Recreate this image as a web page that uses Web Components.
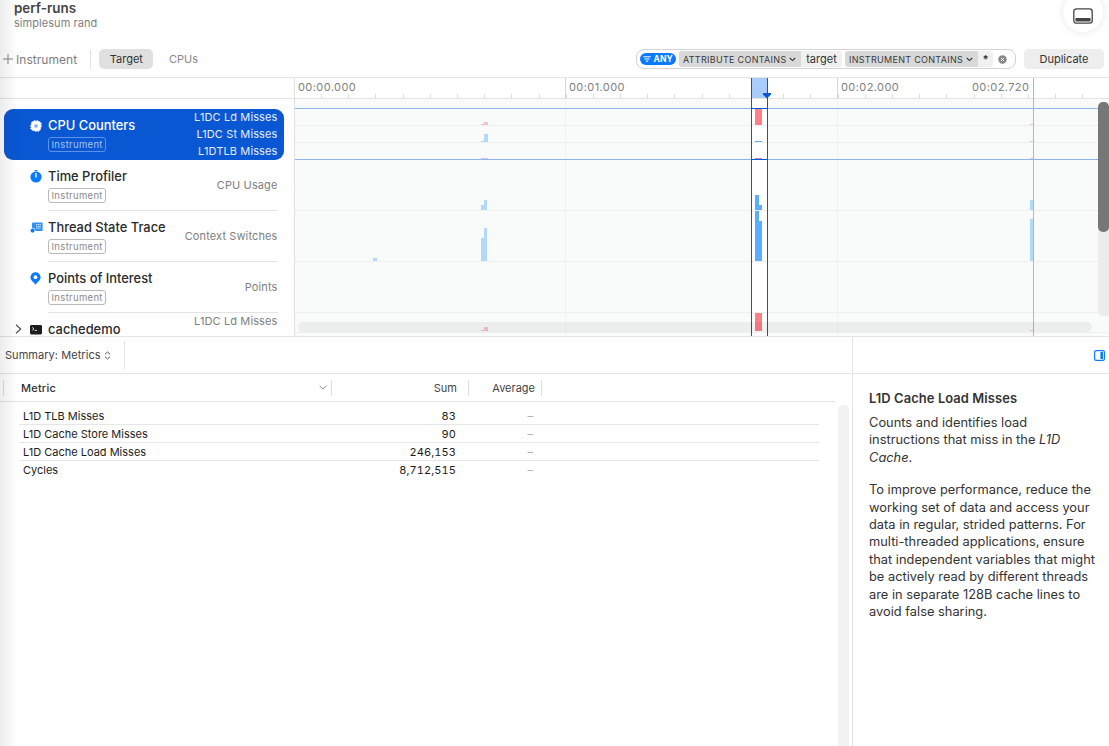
<!DOCTYPE html>
<html lang="en"><head><meta charset="utf-8"><title>perf-runs</title>
<style>
html,body{margin:0;padding:0;background:#fff;overflow:hidden}
body{font-family:Inter,"Liberation Sans",sans-serif;width:1109px;height:746px;position:relative}
</style></head><body>
<perf-app>
  <perf-header slot="header"></perf-header>
  <perf-toolbar slot="toolbar"></perf-toolbar>
  <track-list slot="list">
    <track-row name="CPU Counters" labels="L1DC Ld Misses|L1DC St Misses|L1DTLB Misses" selected>
      <svg slot="icon" width="12" height="12" viewBox="0 0 12 12"><path fill="#fff" d="M3 1.2h.9V.3h1v.9h.6V.3h1v.9h.6V.3h1v.9H9a1.8 1.8 0 0 1 1.8 1.8v.1h.9v1h-.9v.6h.9v1h-.9v.6h.9v1h-.9V9A1.8 1.8 0 0 1 9 10.800h-.1v.9h-1v-.9h-.6v.9h-1v-.9h-.6v.9h-1v-.9H3A1.8 1.8 0 0 1 1.200 9v-.1H.3v-1h.9v-.6H.3v-1h.9v-.6H.3v-1h.9V3A1.8 1.8 0 0 1 3 1.200z"/><rect x="4.400" y="4.400" width="3.200" height="3.200" rx=".5" fill="#7fa8ea"/></svg>
    </track-row>
    <track-row name="Time Profiler" labels="CPU Usage">
      <svg slot="icon" width="12" height="13" viewBox="0 0 12 13"><circle cx="6" cy="7" r="5.600" fill="#0a7bff"/><rect x="4.600" y="0" width="2.800" height="1.200" fill="#0a7bff"/><path d="M6 3.600V7" stroke="#fff" stroke-width="1.300" stroke-linecap="round"/></svg>
    </track-row>
    <track-row name="Thread State Trace" labels="Context Switches">
      <svg slot="icon" width="13" height="12" viewBox="0 0 13 12"><rect x="2" y=".6" width="10.600" height="8.400" rx="1" fill="#2f8df5"/><path d="M6 2.600h5M6.200 4.400h4.800M6.200 6.200h4.800" stroke="#fff" stroke-width=".9" stroke-dasharray="1.400 .7"/><circle cx="2.600" cy="8.600" r="2.400" fill="#0a7bff" stroke="#fff" stroke-width=".7"/></svg>
    </track-row>
    <track-row name="Points of Interest" labels="Points">
      <svg slot="icon" width="11" height="13" viewBox="0 0 11 13"><path fill="#0a7bff" d="M5.500.2A5.100 5.100 0 0 1 10.600 5.300c0 3-3.100 4.600-5.100 7.500C3.500 9.900.4 8.300.4 5.300A5.100 5.100 0 0 1 5.500.2z"/><circle cx="5.500" cy="5.200" r="1.900" fill="#fff"/></svg>
    </track-row>
    <track-row name="cachedemo" labels="L1DC Ld Misses" top expandable>
      <svg slot="icon" width="12" height="10" viewBox="0 0 12 10"><rect width="12" height="9.500" rx="1.400" fill="#1d1d1f"/><path d="M2.200 2.400 4 3.800 2.200 5.200" fill="none" stroke="#fff" stroke-width=".8"/><path d="M4.600 5.400h2.400" stroke="#fff" stroke-width=".8"/></svg>
    </track-row>
  </track-list>
  <time-line slot="timeline"></time-line>
  <summary-bar slot="summary"></summary-bar>
  <metrics-table slot="table">
    <metric-row name="L1D TLB Misses" sum="83"></metric-row>
    <metric-row name="L1D Cache Store Misses" sum="90"></metric-row>
    <metric-row name="L1D Cache Load Misses" sum="246,153"></metric-row>
    <metric-row name="Cycles" sum="8,712,515" last></metric-row>
  </metrics-table>
  <help-pane slot="help" title="L1D Cache Load Misses">
    <p>Counts and identifies load<br>instructions that miss in the <em>L1D</em><br><em>Cache</em>.</p>
    <p>To improve performance, reduce the<br>working set of data and access your<br>data in regular, strided patterns. For<br>multi-threaded applications, ensure<br>that independent variables that might<br>be actively read by different threads<br>are in separate 128B cache lines to<br>avoid false sharing.</p>
  </help-pane>
</perf-app>
<script>
function def(name, html, init){
  customElements.define(name, class extends HTMLElement{
    constructor(){super();this.attachShadow({mode:'open'});}
    connectedCallback(){
      this.shadowRoot.innerHTML = typeof html==='function'?html(this):html;
      if(init)init(this);
    }
  });
}
def('perf-app',`<style>
:host{display:flex;flex-direction:column;width:1109px;height:746px;overflow:hidden;position:relative;color:#222}
.main{display:flex;height:258px;border-top:1px solid #e4e4e4;border-bottom:1px solid #e4e4e4;flex:none;overflow:hidden}
.lower{display:flex;flex:1;min-height:0}
.left{width:852px;flex:none;display:flex;flex-direction:column;border-right:1px solid #e4e4e4;min-height:0}
.right{flex:1;display:flex;flex-direction:column;min-width:0}
.rhead{height:36px;border-bottom:1px solid #e4e4e4;flex:none;display:flex;align-items:center;justify-content:flex-end;padding:0 4px 0 0;box-sizing:content-box}
.shade{position:absolute;left:0;top:0;bottom:0;width:18px;background:linear-gradient(90deg,rgba(0,0,0,.075),rgba(0,0,0,0));pointer-events:none}
</style>
<slot name="header"></slot><slot name="toolbar"></slot>
<div class="main"><slot name="list"></slot><slot name="timeline"></slot></div>
<div class="lower"><div class="left"><slot name="summary"></slot><slot name="table"></slot></div>
<div class="right"><div class="rhead"><svg width="11" height="11" viewBox="0 0 11 11"><rect x=".6" y=".6" width="9.800" height="9.800" rx="1.600" fill="#fff" stroke="#0a7bff" stroke-width="1.200"/><rect x="6.400" y="2" width="2.600" height="7" rx=".5" fill="#0a7bff"/></svg></div><slot name="help"></slot></div></div>
<div class="shade"></div>`);

def('perf-header',`<style>
:host{display:block;height:42px;position:relative;flex:none;box-sizing:border-box;padding:1px 0 0 14px}
.t{font-size:13.400px;font-weight:600;color:#444;line-height:15px}
.s{font-size:11px;color:#808080;line-height:14px;letter-spacing:.05px}
.btn{position:absolute;right:6px;top:-8px;width:40px;height:40px;border-radius:50%;background:#fff;box-shadow:0 0 8px rgba(0,0,0,.1);display:flex;align-items:center;justify-content:center}
svg{margin-top:8px}
</style><div class="t">perf-runs</div><div class="s">simplesum rand</div>
<div class="btn"><svg width="20" height="16" viewBox="0 0 20 16"><rect x=".8" y=".8" width="18.400" height="14.400" rx="2.600" fill="#fff" stroke="#444" stroke-width="1.300"/><rect x="2.400" y="10" width="15.200" height="3.600" rx=".8" fill="#444"/></svg></div>`);

def('perf-toolbar',`<style>
:host{display:flex;align-items:center;height:35px;flex:none;box-sizing:border-box;padding:7px 5px 8px 3px;font-size:12px;color:#7d7d7d}
.plus{display:flex;width:13px;margin-right:0}
.inst{letter-spacing:.05px}
.div{width:1px;height:19px;background:#e2e2e2;margin:0 8px 0 13px}
.tab{height:20px;line-height:20px;font-size:11px;padding:0 10.500px;border-radius:5px}
.on{background:#e0e0e0;color:#333;margin-right:5px}
.off{color:#888}
.sp{flex:1}
.dup{width:80px;height:20px;line-height:20px;text-align:center;background:#eeeeee;border-radius:5px;font-size:11px;color:#333;margin-left:8px}
</style>
<span class="plus"><svg width="10" height="10" viewBox="0 0 10 10"><path d="M5 0v10M0 5h10" stroke="#858585" stroke-width="1"/></svg></span>
<span class="inst">Instrument</span><span class="div"></span>
<span class="tab on">Target</span><span class="tab off">CPUs</span><span class="sp"></span>
<filter-bar></filter-bar><span class="dup">Duplicate</span>`);

const chev='<svg width="7" height="5" viewBox="0 0 7 5"><path d="M.8 1l2.700 2.600L6.200 1" fill="none" stroke="#333" stroke-width="1.100"/></svg>';
def('filter-bar',`<style>
:host{display:flex;align-items:center;width:380px;height:20px;box-sizing:border-box;border:1px solid #d4d4d4;border-radius:8px;padding:0 3px;font-size:9px;color:#3a3a3a;background:#fff}
.any{display:flex;align-items:center;justify-content:center;gap:2.500px;width:36px;height:12px;border-radius:6px;background:#0a7bff;color:#fff;font-weight:700;font-size:8.500px;margin-right:3px;letter-spacing:.1px}
.tok{height:16px;display:flex;align-items:center;background:#d8d8d8;border-radius:3px 0 0 3px;padding:0 0 0 4px;letter-spacing:.3px;gap:3px;white-space:nowrap;box-sizing:border-box}
.val{height:16px;display:flex;align-items:center;background:#f0f0f0;border-radius:0 3px 3px 0;font-size:11px;box-sizing:border-box;justify-content:center;color:#333}
.clear{margin-left:5px;display:flex}
</style>
<span class="any"><svg width="8" height="6" viewBox="0 0 8 6"><path d="M.3.800h7.400M1.500 3h5M2.800 5.200h2.400" stroke="#fff" stroke-width="1"/></svg>ANY</span>
<span class="tok" style="width:122px">ATTRIBUTE CONTAINS ${chev}</span><span class="val" style="width:41px">target</span>
<span class="tok" style="width:133px;margin-left:3px">INSTRUMENT CONTAINS ${chev}</span><span class="val" style="width:15px;font-weight:700">*</span>
<span class="clear"><svg width="9" height="9" viewBox="0 0 9 9"><circle cx="4.500" cy="4.500" r="4.200" fill="#888"/><path d="M3 3l3 3M6 3L3 6" stroke="#fff" stroke-width="1"/></svg></span>`);

def('track-list',`<style>
:host{display:block;width:294px;flex:none;border-right:1px solid #e0e0e0;overflow:hidden}
.head{height:20px;border-bottom:1px solid #e4e4e4}
.body{padding-top:10px}
</style><div class="head"></div><div class="body"><slot></slot></div>`);

def('track-row',el=>{
  const labels=(el.getAttribute('labels')||'').split('|').map(l=>`<div>${l}</div>`).join('');
  const chevron=el.hasAttribute('expandable')?`<svg class="exp" width="7" height="10" viewBox="0 0 7 10"><path d="M1 .8 5.600 5 1 9.200" fill="none" stroke="#555" stroke-width="1.300"/></svg>`:'';
  return `<style>
:host{display:block;position:relative;height:51px;margin:0 10px 0 4px;font-size:13px;color:#2b2b2b}
:host([selected]){background:#0a57d3;border-radius:9px;color:#fff}
.wrap{display:flex;height:100%;box-sizing:border-box;padding:0 6.500px 0 26px}
.icon{width:18px;flex:none;height:13px;margin-top:10px;display:flex;align-items:center;justify-content:flex-start}
.mid{flex:1;padding-top:9px;min-width:0}
.name{font-weight:500;line-height:15px;font-size:12.900px;white-space:nowrap}
.badge{display:inline-block;margin-top:4px;height:13px;line-height:13px;border:1px solid #b9b9b9;border-radius:3px;padding:0 2.500px;font-size:9.500px;color:#8a8a8a;letter-spacing:.32px}
:host([selected]) .badge{border-color:#5d92e6;color:#a4c4f4}
.labels{display:flex;flex-direction:column;justify-content:center;text-align:right;font-size:11px;line-height:17px;color:#808080;white-space:nowrap;letter-spacing:.12px}
:host([selected]) .labels{color:#e4eeff}
:host([top]) .labels{justify-content:flex-start}
.sep{position:absolute;left:44px;right:6px;bottom:0;height:1px;background:#e4e4e4}
:host([selected]) .sep,:host([top]) .sep{display:none}
.exp{position:absolute;left:11px;top:11px}
</style>${chevron}<div class="wrap"><span class="icon"><slot name="icon"></slot></span><div class="mid"><div class="name">${el.getAttribute('name')}</div>${el.hasAttribute('top')?'':'<span class="badge">Instrument</span>'}</div><div class="labels">${labels}</div></div><div class="sep"></div>`;
});

/* timeline: a free canvas, coordinates below are page pixels, converted to the canvas origin */
const OX=295,OY=78;
const box=(x,y,w,h,c,extra='')=>`<i style="left:${x-OX}px;top:${y-OY}px;width:${w}px;height:${h}px;background:${c};${extra}"></i>`;
def('time-line',()=>{
  const P='#f7c3c6',B='#b3d9fa',V='#e3bfe6',R='#fe7f85',A='#5aaeff',M='#c783cc';
  let s='';
  s+=box(565,99,1,237,'#f1f2f2')+box(837,99,1,237,'#f1f2f2');
  s+=box(751,99,17,237,'#fff')+box(751,78,17,20,'#a8cdfb');
  [125,142,210,261,312,332].forEach(y=>s+=box(OX,y,814,1,'#eeefef'));
  s+=box(484,122,4,3,P)+box(481,124,3,1,P)+box(484,134,4,8,B)+box(481,141,3,1,B)+box(481,158,7,1,V);
  s+=box(481,205,3,5,B)+box(484,200,3,10,B)+box(481,238,3,23,B)+box(484,228,3,33,B)+box(373,258,4,3,B);
  s+=box(484,327,4,4,P)+box(481,330,3,1,P);
  s+=box(1030,124,3,1,P)+box(1030,141,3,1,B)+box(1030,158,3,1,V)+box(1030,200,3,10,B)+box(1030,219,3,42,B)+box(1030,330,3,1,P);
  s+=box(755,109,7,16,R)+box(755,141,7,1,A)+box(755,158,7,1,M);
  s+=box(755,195,4,15,A)+box(759,205,3,5,A)+box(755,211,4,50,A)+box(759,221,3,40,A)+box(755,313,7,18,R);
  s+=box(OX,108,814,1,'#8fb3ea')+box(OX,159,814,1,'#8fb3ea');
  s+=box(751,108,17,1,'#0a57d3')+box(751,159,17,1,'#0a57d3');
  s+=box(751,78,1,258,'#0a57d3')+box(767,78,1,258,'#0a57d3');
  s+=box(1033,78,1,258,'#b7b7b7');
  s+=box(298,322,794,10,'rgba(0,0,0,.05)','border-radius:5px;');
  s+=box(1098,102,11,214,'#ececec','border-radius:5px 0 0 5px;');
  s+=box(1098,102,11,130,'#777','border-radius:5px;');
  return `<style>
:host{display:block;flex:1;position:relative;overflow:hidden;background:#f9fafa}
.ruler{height:20px;background:#fff repeating-linear-gradient(90deg,transparent 0 26px,#ddd 26px 27px,transparent 27px 27.190px) 0 16px/100% 4px no-repeat;border-bottom:1px solid #e4e4e4;position:relative}
i{position:absolute;display:block}
b{position:absolute;top:3px;font-weight:400;font-size:11px;line-height:13px;color:#808080;letter-spacing:.42px;background:#fff;white-space:nowrap}
.maj{position:absolute;top:0;height:20px;width:1px;background:#d6d6d6}
.tip{position:absolute;left:${763-OX}px;top:${93-OY}px}
</style><div class="ruler"></div>${s}
<span class="maj" style="left:${565-OX}px"></span><span class="maj" style="left:${837-OX}px"></span>
<b style="left:3px">00:00.000</b><b style="left:${569-OX}px">00:01.000</b><b style="left:${841-OX}px">00:02.000</b><b style="left:${972-OX}px">00:02.720</b>
<svg class="tip" width="8" height="6" viewBox="0 0 8 6"><path d="M0 0h8v1.500L4 5.500 0 1.500z" fill="#0a57d3"/></svg>`;
});

def('summary-bar',`<style>
:host{display:flex;align-items:center;height:36px;flex:none;border-bottom:1px solid #e4e4e4;font-size:11px;color:#444;padding-left:5px;letter-spacing:.05px}
.c{margin-left:3px;display:flex}
.d{width:1px;height:28px;background:#e4e4e4;margin-left:13px}
</style><span>Summary: Metrics</span><span class="c"><svg width="7" height="9" viewBox="0 0 7 9"><path d="M1 3.200 3.500 1 6 3.200M1 5.800 3.500 8 6 5.800" fill="none" stroke="#555" stroke-width="1"/></svg></span><span class="d"></span>`);

def('metrics-table',`<style>
:host{display:flex;flex-direction:column;flex:1;min-height:0;font-size:11px}
.head{display:grid;grid-template-columns:3px 328px 137px 74px;width:835px;height:27px;border-bottom:1px solid #e4e4e4;align-items:center;flex:none;box-sizing:content-box;color:#444}
.c{height:16px;line-height:16px;border-left:1px solid #dcdcdc;box-sizing:border-box;white-space:nowrap}
.m{padding:0 4px 0 17px;font-weight:500;color:#333;display:flex;justify-content:space-between;align-items:center;letter-spacing:.2px}
.s{text-align:right;padding-right:11px}
.a{text-align:right;padding-right:6px;border-right:1px solid #dcdcdc}
.body{display:flex;flex:1;min-height:0}
.rows{width:838px;flex:none;padding:5px 0 0 19px;box-sizing:border-box}
.bar{width:11px;margin-top:3px;background:#f2f2f2;border-radius:5px 5px 0 0}
</style>
<div class="head"><span></span><span class="c m">Metric <svg width="8" height="5" viewBox="0 0 8 5"><path d="M.6.800 4 4 7.400.800" fill="none" stroke="#8a8a8a" stroke-width="1"/></svg></span><span class="c s">Sum</span><span class="c a">Average</span></div>
<div class="body"><div class="rows"><slot></slot></div><div class="bar"></div></div>`);

def('metric-row',el=>`<style>
:host{display:grid;grid-template-columns:210px 227px 77px;width:800px;height:18px;box-sizing:border-box;border-bottom:1px solid #e6e6e6;font-size:11px;line-height:18px;color:#1c1c1c}
:host([last]){border-bottom:0}
.n{padding-left:4px;white-space:nowrap}.v{text-align:right;letter-spacing:.1px;font-variant-numeric:tabular-nums}.d{text-align:right;color:#b0b0b0}
</style><span class="n">${el.getAttribute('name')}</span><span class="v">${el.getAttribute('sum')}</span><span class="d">–</span>`);

def('help-pane',el=>`<style>
:host{display:block;flex:1;padding:17px 0 0 16px;color:#333;white-space:nowrap}
h3{margin:0 0 8px;font-size:12.900px;line-height:15px;font-weight:600;letter-spacing:.1px}
::slotted(p){margin:0 0 15px;font-size:12.850px;line-height:17.400px}
</style><h3>${el.getAttribute('title')}</h3><slot></slot>`);
</script>
</body></html>
